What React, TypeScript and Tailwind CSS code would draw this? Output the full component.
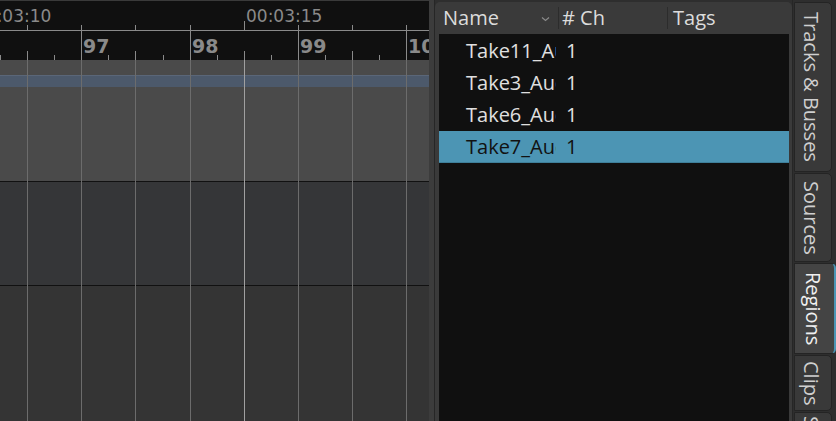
const barX = [81, 190, 298, 406];
const bars = ['97', '98', '99', '100'];
const secX = [27, 81, 135, 190, 244, 298, 352, 406];
const beatX = [0, 27, 54, 108, 135, 163, 217, 244, 271, 325, 352, 379];
const tallBeats = [27, 135, 244, 352];

const rows = [
  { name: 'Take11_Audio', ch: '1' },
  { name: 'Take3_Audio', ch: '1' },
  { name: 'Take6_Audio', ch: '1' },
  { name: 'Take7_Audio', ch: '1', selected: true },
];

const tabs = [
  { label: 'Tracks & Busses', h: 'h-[170px]' },
  { label: 'Sources', h: 'h-[89px]' },
  { label: 'Regions', h: 'h-[91px]', active: true },
  { label: 'Clips', h: 'h-[56px]' },
  { label: 'Sources', h: 'h-[60px]', last: true },
];

const Ruler = () => (
  <div className="relative h-[59px] bg-[#101010] overflow-hidden font-['DejaVu_Sans',sans-serif]">
    {/* timecode */}
    <span className="absolute left-[-25px] top-[5px] text-[17px] leading-[20px] text-[#8a8a8a]">00:03:10</span>
    <span className="absolute left-[246px] top-[5px] text-[17px] leading-[20px] text-[#8a8a8a]">00:03:15</span>
    {secX.map((x) => (
      <div
        key={x}
        className={`absolute w-px bg-[#8a8a8a] ${x === 244 ? 'top-[20px] h-[10px]' : 'top-[24px] h-[6px]'}`}
        style={{ left: x }}
      />
    ))}
    <div className="absolute left-0 right-0 top-[29px] h-px bg-[#8a8a8a]" />
    {/* bars & beats */}
    {barX.map((x, i) => (
      <div key={x}>
        <div className="absolute top-[29px] h-[30px] w-px bg-[#8a8a8a]" style={{ left: x }} />
        <span
          className="absolute top-[33px] text-[19px] leading-[24px] font-bold text-[#8a8a8a]"
          style={{ left: x + 2 }}
        >
          {bars[i]}
        </span>
      </div>
    ))}
    {beatX.map((x) => (
      <div
        key={x}
        className={`absolute w-px bg-[#8a8a8a] ${tallBeats.includes(x) ? 'top-[50px] h-[9px]' : 'top-[54px] h-[5px]'}`}
        style={{ left: x }}
      />
    ))}
  </div>
);

const Tracks = () => (
  <div className="relative flex-1 flex flex-col">
    <div className="h-[121px] bg-[#4a4a4a] pt-[15px]">
      <div className="h-[12px] bg-[#4c596b] border-t border-[#5a6678]" />
    </div>
    <div className="h-px bg-[#111]" />
    <div className="h-[103px] bg-[#353638]" />
    <div className="h-px bg-[#111]" />
    <div className="flex-1 bg-[#343434]" />
    {secX.map((x) => (
      <div
        key={x}
        className={`absolute top-0 bottom-0 w-px ${x === 244 ? 'bg-[#a0a0a0]' : 'bg-[#6c6c6c]'}`}
        style={{ left: x }}
      />
    ))}
  </div>
);

export default function App() {
  return (
    <div className="w-[836px] h-[421px] flex overflow-hidden bg-[#2e2e2e] font-['Open_Sans',sans-serif]">
      {/* timeline */}
      <div className="w-[429px] flex flex-col">
        <div className="h-px bg-[#3a3a3a]" />
        <Ruler />
        <Tracks />
      </div>

      {/* pane divider */}
      <div className="w-[5px] bg-[#3c3c3c]" />
      <div className="w-px bg-[#262626]" />

      {/* regions list */}
      <div className="w-[357px] mt-[2px] rounded-t-[5px] bg-[#3a3a3a] flex flex-col pl-[4px] pr-[3px]">
        <div className="h-[32px] flex items-center text-[20px] text-[#dcdcdc]">
          <div className="w-[119px] h-full flex items-center pl-[4px] pr-[8px]">
            <span className="flex-1">Name</span>
            <svg width="9" height="6" viewBox="0 0 9 6" className="mt-[2px]">
              <path d="M1 1.5 L4.5 4.5 L8 1.5" fill="none" stroke="#8a8a8a" strokeWidth="1.2" />
            </svg>
          </div>
          <div className="w-px h-[22px] bg-[#2c2c2c]" />
          <div className="w-[108px] pl-[3px]">#&nbsp;Ch</div>
          <div className="w-px h-[22px] bg-[#2c2c2c]" />
          <div className="flex-1 pl-[5px]">Tags</div>
        </div>
        <div className="flex-1 bg-[#101010] pt-px">
          {rows.map((r) => (
            <div
              key={r.name}
              className={`h-[32px] flex items-center text-[20px] ${
                r.selected ? 'bg-[#4c95b4] text-[#121212] border-b border-[#3f7f9a]' : 'text-[#e0e0e0]'
              }`}
            >
              <div className="w-[117px] pl-[27px] overflow-hidden whitespace-nowrap">{r.name}</div>
              <div className="pl-[10px]">{r.ch}</div>
            </div>
          ))}
        </div>
      </div>

      {/* vertical tabs */}
      <div className="flex-1 flex flex-col gap-px pt-[2px] pl-px border-l border-[#262626]">
        {tabs.map((t, i) => (
          <div
            key={i}
            className={`${t.h} shrink-0 flex items-center overflow-hidden rounded-r-[5px] border border-[#242424] text-[20px] leading-[28px] [writing-mode:vertical-rl] whitespace-nowrap ${
              t.last ? 'justify-start pt-[3px]' : 'justify-center'
            } ${
              t.active
                ? 'w-[42px] bg-[#444] text-[#f0f0f0] border-r-[2px] border-r-[#4c95b4] pl-[4px] pr-[8px]'
                : 'w-[38px] bg-[#393939] text-[#cfcfcf] pl-[2px] pr-[6px]'
            }`}
          >
            {t.label}
          </div>
        ))}
      </div>
    </div>
  );
}
